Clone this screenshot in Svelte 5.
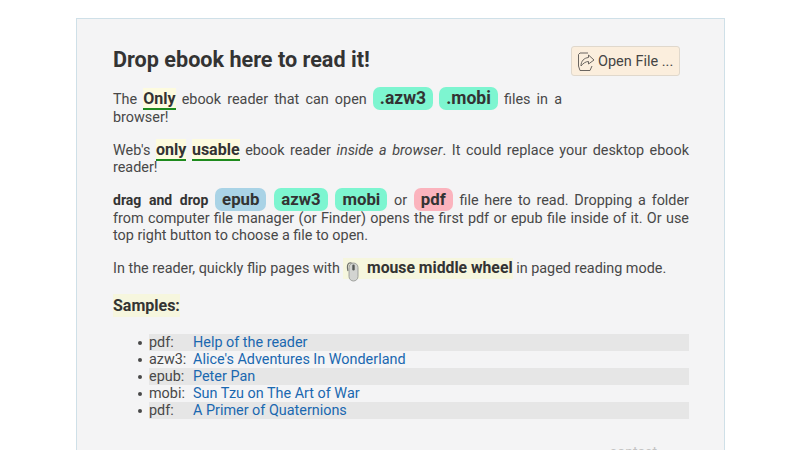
<script lang="ts">
  const samples = [
    { kind: "pdf:", title: "Help of the reader" },
    { kind: "azw3:", title: "Alice's Adventures In Wonderland" },
    { kind: "epub:", title: "Peter Pan" },
    { kind: "mobi:", title: "Sun Tzu on The Art of War" },
    { kind: "pdf:", title: "A Primer of Quaternions" },
  ];
</script>

<div class="page">
  <main class="card">
    <button class="open-btn">
      <svg viewBox="0 0 18 19" fill="none" aria-hidden="true">
        <path d="M1.500 14V2.500L3 1h8" stroke="#6a6560" stroke-width="1"/>
        <path d="M1.500 14l1.500 4.500h10l2-4.500" stroke="#6a6560" stroke-width="1" stroke-linejoin="round"/>
        <path d="M4 14c0-5 3-8 7.500-8.500V3l5.500 5-5.500 4V9.500C8.500 9.500 6 11.500 4 14z" stroke="#6a6560" stroke-width="1" stroke-linejoin="round"/>
      </svg>
      Open File ...
    </button>
    <h2>Drop ebook here to read it!</h2>

    <p>The <b class="mark">Only</b> ebook reader that can open <span class="pill big mint">.azw3</span> <span class="pill big mint">.mobi</span> files in a browser!</p>

    <p>Web's <b class="mark">only</b> <b class="mark">usable</b> ebook reader <i>inside a browser</i>. It could replace your desktop ebook reader!</p>

    <p><b class="drag">drag and drop</b> <span class="pill blue">epub</span> <span class="pill mint">azw3</span> <span class="pill mint">mobi</span> or <span class="pill pink">pdf</span> file here to read. Dropping a folder from computer file manager (or Finder) opens the first pdf or epub file inside of it. Or use top right button to choose a file to open.</p>

    <p class="wheel-line">
      In the reader, quickly flip pages with
      <span class="wheel">
        <svg viewBox="0 0 16 21" aria-hidden="true">
          <path d="M5 10C3.500 4 5 .5 9.500 2.500" fill="none" stroke="#6f716e" stroke-width="1.200"/>
          <rect x="6" y="2" width="9" height="18" rx="4.500" fill="#d3d4d1" stroke="#8e908d" stroke-width=".8"/>
          <rect x="9.300" y="3.500" width="2.400" height="6" rx="1.200" fill="#555855"/>
        </svg>
        <b>mouse middle wheel</b>
      </span>
      in paged reading mode.
    </p>

    <h3><span>Samples:</span></h3>

    <ul>
      {#each samples as s}
        <li>
          <div class="row">
            <span class="kind">{s.kind}</span>
            <a href="#top">{s.title}</a>
          </div>
        </li>
      {/each}
    </ul>

    <div class="contact">contact</div>
  </main>
</div>

<style>
  :global(body) {
    margin: 0;
    background: #fff;
  }
  .page {
    height: 450px;
    overflow: hidden;
    padding-top: 18px;
    box-sizing: border-box;
    font-family: Roboto, "Liberation Sans", sans-serif;
    font-size: 14.400px;
    line-height: 17px;
    color: #484848;
  }
  .card {
    width: 649px;
    margin-left: 76px;
    box-sizing: border-box;
    padding: 27px 35px 30px 36px;
    background: #f4f4f5;
    border: 1px solid #cfe0e8;
  }
  .open-btn {
    float: right;
    display: flex;
    align-items: center;
    gap: 3px;
    width: 109px;
    height: 30px;
    margin: 0 9px 26px 9px;
    padding: 0 5px;
    background: #fbeedd;
    border: 1px solid #e0d8cc;
    border-radius: 3px;
    font: inherit;
    font-size: 14.500px;
    color: #444;
    white-space: nowrap;
  }
  .open-btn svg {
    width: 18px;
    height: 19px;
    flex-shrink: 0;
  }
  h2 {
    margin: 0 0 18px;
    padding-top: 1px;
    font-size: 21.600px;
    line-height: 25px;
    font-weight: 700;
    color: #333;
  }
  p {
    margin: 0 0 15px;
    text-align: justify;
  }
  b {
    color: #333;
  }
  .mark {
    font-size: 16px;
    padding: 1px 0 0;
    background: #fdfbdf;
    border-bottom: 2px solid #1d8a1d;
  }
  .pill {
    display: inline-block;
    padding: 2px 7px;
    margin: -3px 1px -1.200px;
    border-radius: 7px;
    font-size: 16.800px;
    line-height: 19px;
    font-weight: 700;
    color: #333;
  }
  .big {
    padding: 2px 7px;
    margin: -4px 0 -1.200px;
    font-size: 17.500px;
  }
  .mint { background: #7df5d0; }
  .blue { background: #a9d3e6; }
  .pink { background: #fbb3bd; }
  .drag {
    font-size: 14px;
    word-spacing: 2px;
  }
  .wheel {
    background: #f6f6de;
    padding: 2px 0;
  }
  .wheel svg {
    width: 16px;
    height: 21px;
    vertical-align: -6px;
    margin: -3px 0;
  }
  .wheel b {
    margin-left: 4px;
    font-size: 15.750px;
  }
  h3 {
    margin: 17px 0 19px;
    font-size: 16px;
    line-height: 19px;
    font-weight: 700;
    color: #333;
  }
  h3 span {
    background: #f6f6de;
    padding: 2px 0;
  }
  ul {
    margin: 0;
    padding: 0 0 0 24px;
    list-style: none;
  }
  li {
    display: flex;
    height: 17px;
  }
  li::before {
    content: "";
    width: 4px;
    height: 4px;
    margin: 7px 7px 0 1px;
    border-radius: 50%;
    background: #484848;
    flex-shrink: 0;
  }
  .row {
    display: flex;
    flex: 1;
    height: 17px;
  }
  li:nth-child(odd) .row {
    background: #e6e6e6;
  }
  .kind {
    width: 44px;
  }
  a {
    color: #1a68b0;
    text-decoration: none;
  }
  .contact {
    margin-top: 25px;
    padding-right: 32px;
    text-align: right;
    font-size: 14px;
    color: #c4c4c4;
  }
</style>
